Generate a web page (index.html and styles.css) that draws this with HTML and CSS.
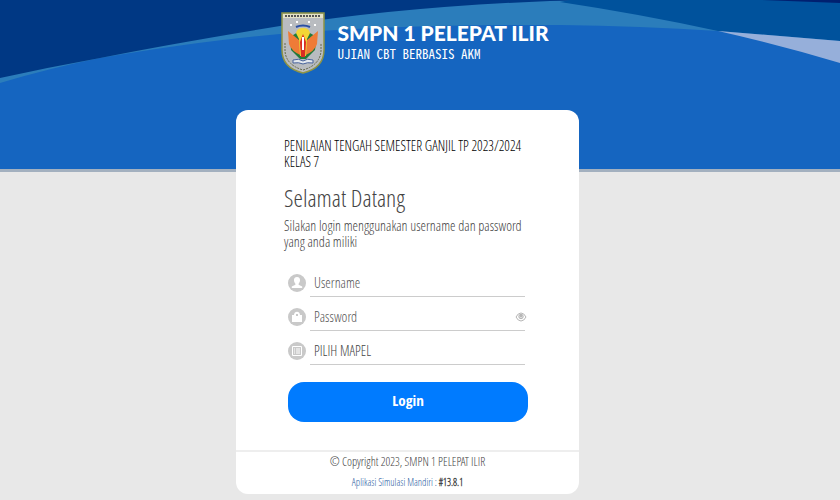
FILE: index.html
```html
<!DOCTYPE html>
<html lang="id">
<head>
    <meta charset="UTF-8">
    <meta name="viewport" content="width=device-width, initial-scale=1.0">
    <title>SMPN 1 PELEPAT ILIR</title>
    <link rel="stylesheet" href="styles.css">
</head>
<body>
    <header class="header">
        <svg class="waves" viewBox="0 0 840 169" preserveAspectRatio="none" aria-hidden="true">
            <path fill="#2b7dbb" d="M0 0H840V41L718 31Q640 26 560 25Q400 24 280 34Q200 41 100 58Q50 68 0 83Z"/>
            <path fill="#003884" d="M0 0H600L550 1Q400 7 280 26Q170 44 100 58Q50 67 0 78Z"/>
            <path fill="#00529c" d="M570 0H840V41L718 31Q640 14 560 2Z"/>
            <path fill="#96afda" d="M718 31L840 41V63Q780 45 718 31Z"/>
            <path fill="#002070" d="M762 0H840V3Z"/>
        </svg>
        <div class="brand">
            <svg class="crest" viewBox="0 0 44 62" aria-hidden="true">
                <path fill="#b9bcc0" stroke="#8f9444" stroke-width="1.5" d="M1 1H43V38Q43 56 22 61Q1 56 1 38Z"/>
                <path fill="#e4e2c8" d="M2 2H42V6H2Z"/>
                <path stroke="#555" stroke-width="2" stroke-dasharray="2 1" d="M4 4H40"/>
                <path fill="none" stroke="#66694c" stroke-dasharray="2 1" d="M4 31V39Q5 53 22 58Q39 53 40 39V31"/>
                <path fill="#fff" d="M9 12h2v2H9zM15 9h2v2h-2zM27 9h2v2h-2zM33 12h2v2h-2z"/>
                <path fill="none" stroke="#2a4fa5" stroke-width="2" d="M15 15Q22 12 29 15"/>
                <path fill="#237a3a" d="M9 25L17 20H27L36 25L34 38L25 47H19L10 38Z"/>
                <path fill="#ef7b37" d="M7 19L18 28L21 44Q10 39 8 32ZM37 19L26 28L23 44Q34 39 36 32Z"/>
                <path fill="#f3d735" d="M15 21Q16 16 22 16Q28 16 29 21L26 27L25 44H19L18 27Z"/>
                <path fill="#d92c25" d="M19 30L22 22L25 30L24 45H20Z"/>
                <path fill="#fff" d="M21 25H23V38H21Z"/>
                <path fill="#e3e8ee" stroke="#48639b" d="M12 48Q18 46 22 49Q26 46 32 48V51Q26 50 22 52Q18 50 12 51Z"/>
            </svg>
            <div class="brand-text">
                <h1 class="brand-name">SMPN 1 PELEPAT ILIR</h1>
                <p class="brand-sub">UJIAN CBT BERBASIS AKM</p>
            </div>
        </div>
    </header>

    <main class="page">
        <div class="card">
            <form class="login">
                <p class="exam">PENILAIAN TENGAH SEMESTER GANJIL TP 2023/2024 KELAS 7</p>
                <h2 class="welcome">Selamat Datang</h2>
                <p class="hint">Silakan login menggunakan username dan password yang anda miliki</p>

                <div class="field">
                    <label for="username" aria-label="Username">
                        <svg class="icon" viewBox="0 0 18 18">
                            <circle cx="9" cy="9" r="9" fill="#c9c9c9"/>
                            <path fill="#fff" d="M9 3C6.800 3 5.700 4.500 6 6.600C6.100 8 6.700 9 7.400 9.700V10.800L3.800 12.600V14H14.200V12.600L10.600 10.800V9.700C11.300 9 11.900 8 12 6.600C12.300 4.500 11.200 3 9 3Z"/>
                        </svg>
                    </label>
                    <input type="text" id="username" class="control" placeholder="Username">
                </div>
                <div class="field">
                    <label for="password" aria-label="Password">
                        <svg class="icon" viewBox="0 0 18 18">
                            <circle cx="9" cy="9" r="9" fill="#c9c9c9"/>
                            <path fill="#fff" d="M4 7H6C6 2.500 12 2.500 12 7H14V14H4Z"/>
                            <path fill="#c9c9c9" d="M8 6h2v2H8z"/>
                        </svg>
                    </label>
                    <input type="password" id="password" class="control" placeholder="Password">
                    <button type="button" class="reveal" aria-label="Password">
                        <svg viewBox="0 0 12 10">
                            <path fill="#fff" stroke="#b5b5b5" d="M1 5Q3 1 6 1T11 5Q9 9 6 9T1 5Z"/>
                            <circle cx="6" cy="4.500" r="2.200" fill="#ddd" stroke="#b5b5b5"/>
                            <circle cx="6" cy="4" r="1" fill="#aaa"/>
                        </svg>
                    </button>
                </div>
                <div class="field">
                    <label for="mapel" aria-label="PILIH MAPEL">
                        <svg class="icon" viewBox="0 0 18 18">
                            <circle cx="9" cy="9" r="9" fill="#c9c9c9"/>
                            <path fill="none" stroke="#fff" d="M4.500 4.500H13.500V13.500H4.500ZM6 7H7M8 7H12M6 9H7M8 9H12M6 11H7M8 11H12"/>
                        </svg>
                    </label>
                    <select id="mapel" class="control">
                        <option>PILIH MAPEL</option>
                    </select>
                </div>

                <button type="submit" class="submit">Login</button>
            </form>
            <footer class="footer">
                <p class="copyright">© Copyright 2023, SMPN 1 PELEPAT ILIR</p>
                <p class="version"><a href="#">Aplikasi Simulasi Mandiri :</a> <b>#13.8.1</b></p>
            </footer>
        </div>
    </main>
</body>
</html>
```
FILE: styles.css
```css
* {
    box-sizing: border-box;
}
body {
    margin: 0;
    min-height: 100vh;
    background-color: #e8e8e8;
    font-family: "Open Sans Condensed Light", "Noto Sans", sans-serif;
    font-size: 14px;
    line-height: 16px;
    color: #444;
}
h1, h2, p {
    margin: 0;
    font-weight: normal;
}
.header {
    position: relative;
    height: 172px;
    background-color: #1565c0;
    border-bottom: 3px solid #a3b0bf;
}
.waves {
    position: absolute;
    top: 0;
    left: 0;
    width: 100%;
    height: 100%;
}
.brand {
    position: relative;
    display: flex;
    justify-content: center;
    gap: 12px;
    padding: 12px 10px 0 0;
    color: #fff;
}
.crest {
    width: 44px;
    height: 62px;
}
.brand-text {
    padding-top: 7px;
}
.brand-name {
    font-family: Lato, sans-serif;
    font-size: 21px;
    font-weight: 900;
    line-height: 28px;
}
.brand-sub {
    font-family: "Noto Sans Mono CJK SC", "DejaVu Sans Mono", monospace;
    font-size: 13px;
    line-height: 14px;
}
.page {
    position: relative;
    display: flex;
    justify-content: center;
    margin-top: -62px;
    padding: 0 25px 6px 0;
}
.card {
    width: 100%;
    max-width: 343px;
    background-color: #fff;
    border-radius: 12px;
}
.login {
    padding: 28px 46px 28px 48px;
}
.exam {
    color: #000;
}
.welcome {
    padding: 16px 0 8px;
    font-size: 24px;
    line-height: 24px;
}
.hint {
    padding-bottom: 16px;
}
.field {
    display: flex;
    align-items: center;
    gap: 4px;
    height: 34px;
    padding: 0 8px 0 4px;
    position: relative;
}
.icon {
    display: block;
    width: 18px;
    height: 18px;
}
.control {
    flex: 1;
    min-width: 0;
    height: 28px;
    padding: 0 4px;
    border: 0;
    border-bottom: 1px solid #ccc;
    border-radius: 0;
    background: none;
    appearance: none;
    font: inherit;
    color: #444;
}
.control::placeholder {
    color: #555;
}
.reveal {
    position: absolute;
    right: 6px;
    width: 12px;
    height: 10px;
    padding: 0;
    border: 0;
    background: none;
}
.reveal svg {
    display: block;
}
.submit {
    display: block;
    width: 240px;
    max-width: 100%;
    height: 40px;
    margin: 14px 4px 0;
    padding: 0 0 4px;
    border: 0;
    border-radius: 16px;
    background-color: #007bff;
    color: #fff;
    font-family: "Open Sans Condensed", "Noto Sans", sans-serif;
    font-size: 15px;
    font-weight: bold;
}
.footer {
    border-top: 2px solid #eee;
    padding-bottom: 2px;
    text-align: center;
}
.copyright {
    font-size: 12px;
    line-height: 20px;
}
.version {
    font-size: 10px;
    line-height: 20px;
}
.version a {
    color: #1f5aa0;
    text-decoration: none;
}
```
